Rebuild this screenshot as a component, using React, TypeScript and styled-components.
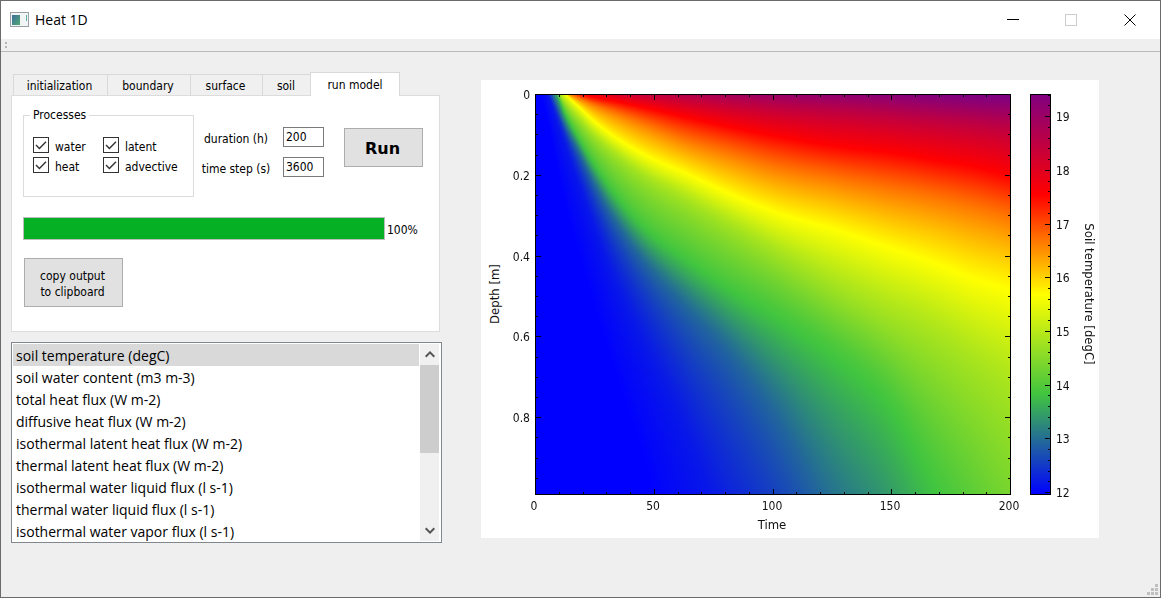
import React, { useEffect, useRef, useState } from "react";
import styled, { createGlobalStyle } from "styled-components";

const uiFont = `"DejaVu Sans Condensed", "DejaVu Sans", sans-serif`;
const shellFont = `"Open Sans", "Noto Sans", sans-serif`;

const GlobalStyle = createGlobalStyle`
  *, *::before, *::after { box-sizing: border-box; }
  body { margin: 0; background: #efefef; font-family: ${uiFont}; font-size: 12px; line-height: 16px; color: #000; }
  button, input { font: inherit; color: inherit; margin: 0; }
`;

const Window = styled.div`
  display: flex;
  flex-direction: column;
  min-height: 100vh;
  border: 1px solid #6b6b6e;
  background: #efefef;
`;

const TitleBar = styled.header`
  display: flex;
  align-items: center;
  height: 38px;
  padding-left: 9px;
  background: #fff;
`;

const Title = styled.h1`
  flex: 1;
  margin: 0 0 0 5px;
  font: 400 14px/20px ${shellFont};
`;

const CaptionButton = styled.button`
  display: grid;
  place-items: center;
  width: 59px;
  height: 100%;
  padding: 0;
  border: 0;
  background: none;
`;

const ToolStrip = styled.div`
  display: flex;
  align-items: flex-start;
  height: 13px;
  padding: 3px 4px;
  border-bottom: 1px solid #b9b9b9;
`;

const Content = styled.main`
  flex: 1;
  display: grid;
  grid-template-columns: 431px minmax(0, 1fr);
  align-items: start;
  gap: 39px;
  padding: 20px 61px 0 10px;
`;

const Sidebar = styled.div`
  display: flex;
  flex-direction: column;
  gap: 10px;
`;

const TabList = styled.div`
  display: flex;
  align-items: flex-end;
  height: 23px;
  padding-left: 2px;
`;

const Tab = styled.button<{ $active?: boolean; $width: number }>`
  width: ${(p) => p.$width}px;
  height: ${(p) => (p.$active ? 24 : 21)}px;
  margin: 0 0 ${(p) => (p.$active ? -1 : 0)}px ${(p) => (p.$active ? -1 : 0)}px;
  padding: ${(p) => (p.$active ? "0" : "2px 2px 0 0")};
  border: 1px solid #d9d9d9;
  border-width: 1px ${(p) => (p.$active ? 1 : 0)}px 0 1px;
  background: ${(p) => (p.$active ? "#fff" : "#f0f0f0")};
  position: relative;
`;

const TabPanel = styled.section`
  width: 429px;
  height: 237px;
  padding: 12px 11px;
  border: 1px solid #dcdcdc;
  background: #fff;
`;

const Controls = styled.div`
  display: flex;
  align-items: flex-start;
`;

const Processes = styled.fieldset`
  display: grid;
  grid-template-columns: 70px auto;
  grid-auto-rows: 20px;
  align-content: start;
  width: 171px;
  height: 90px;
  margin: -1px 0 0;
  padding: 14px 9px 0;
  border: 1px solid #dcdcdc;
  min-width: 0;
`;

const Legend = styled.legend`
  margin-left: -3px;
  padding: 0 3px;
  height: 16px;
`;

const CheckLabel = styled.label`
  display: flex;
  align-items: center;
  gap: 6px;
  height: 20px;
`;

const CheckBox = styled.span`
  display: grid;
  width: 16px;
  height: 16px;
  margin-top: -4px;
  > * { grid-area: 1 / 1; }
  > svg { pointer-events: none; }
  > input:not(:checked) + svg { visibility: hidden; }
`;

const CheckInput = styled.input`
  appearance: none;
  width: 16px;
  height: 16px;
  border: 1px solid #333;
  background: #fff;
`;

const Settings = styled.div`
  display: grid;
  grid-template-columns: 89px 41px;
  row-gap: 10px;
  padding-top: 19px;
`;

const SettingLabel = styled.label`
  padding: 4px 5px 0 0;
  text-align: center;
  white-space: nowrap;
  height: 20px;
`;

const NumberBox = styled.input`
  width: 41px;
  height: 20px;
  padding: 0 2px;
  border: 1px solid #7a7a7a;
  background: #fff;
`;

const PushButton = styled.button<{ $primary?: boolean }>`
  width: ${(p) => (p.$primary ? 79 : 99)}px;
  height: ${(p) => (p.$primary ? 39 : 49)}px;
  margin: ${(p) => (p.$primary ? "20px 0 0 20px" : "18px 0 0 1px")};
  padding: 2px 2px 0 0;
  border: 1px solid #adadad;
  background: #e1e1e1;
  ${(p) => p.$primary && `font-family: "DejaVu Sans", sans-serif; font-weight: 700; font-size: 16px;`}
`;

const ProgressRow = styled.div`
  display: flex;
  align-items: center;
  gap: 2px;
  margin-top: 20px;
`;

const ProgressTrack = styled.div`
  width: 362px;
  height: 23px;
  border: 1px solid #bcbcbc;
  background: #e6e6e6;
`;

const ProgressFill = styled.div`
  height: 100%;
  background: #06b025;
`;

const ProgressText = styled.span`
  padding-top: 2px;
`;

const ListFrame = styled.div`
  display: flex;
  height: 201px;
  padding: 1px 2px 1px 1px;
  border: 1px solid #828790;
  background: #fff;
`;

const List = styled.ul`
  flex: 1;
  margin: 0;
  padding: 0;
  overflow: hidden;
  list-style: none;
  font: 14px/24px ${shellFont};
`;

const ListItem = styled.li<{ $selected: boolean }>`
  height: 22px;
  padding-left: 3px;
  background: ${(p) => (p.$selected ? "#d9d9d9" : "transparent")};
  cursor: default;
`;

const ScrollBar = styled.div`
  display: flex;
  flex-direction: column;
  width: 20px;
  border-left: 1px solid #fff;
  background: #f0f0f0;
`;

const ScrollButton = styled.button`
  display: grid;
  place-items: center;
  height: 21px;
  padding: 0;
  border: 0;
  background: none;
`;

const ScrollTrack = styled.div`
  flex: 1;
`;

const ScrollThumb = styled.div`
  height: 88px;
  background: #cdcdcd;
`;

const ChartCard = styled.figure`
  margin: 8px 0 0;
  background: #fff;
  > svg { display: block; width: 100%; height: auto; }
  text { font-family: ${uiFont}; font-size: 12px; fill: #111; }
  canvas { display: block; width: 475px; height: 400px; }
`;

const AxisTitle = styled.text`
  && { font-size: 13px; }
`;

const StatusBar = styled.footer`
  display: flex;
  justify-content: flex-end;
  padding: 0 2px 2px 0;
`;

/* ---------- temperature field ---------- */

const STOPS = [
  [0, 0, 255],
  [64, 196, 64],
  [255, 255, 0],
  [255, 0, 0],
  [128, 0, 128],
];

function colour(u: number): number[] {
  const s = Math.min(0.99999, Math.max(0, u)) * 4;
  const i = Math.floor(s);
  const f = s - i;
  return STOPS[i].map((c, k) => c + (STOPS[i + 1][k] - c) * f);
}

/* Depth of each isotherm (normalised temperature) at a set of times, in grid cells. */
const TIMES = [0, 12, 20, 30, 45, 60, 80, 112, 150, 195, 245, 300, 350, 400, 440, 475];
const LEVELS = [1, 0.875, 0.75, 0.625, 0.5, 0.375, 0.25, 0.125, 0.06, 0.03, 0.002];
const DEPTHS = [
  [-110, -60, -45, -36, -28, -23, -17, -13, -11, -9, -7, -5, -3, 0, 2, 3],
  [-95, -50, -32, -20, -12, -8, -4, 0, 4, 9, 14, 18, 22, 27, 31, 36],
  [-85, -38, -20, -8, -1, 3, 7, 14, 23, 33, 43, 52, 58, 66, 73, 82],
  [-75, -30, -14, -3, 5, 12, 20, 33, 48, 62, 77, 88, 98, 108, 118, 128],
  [-66, -24, -10, 0, 14, 28, 43, 62, 79, 100, 120, 136, 153, 170, 186, 197],
  [-60, -20, -7, 9, 27, 44, 62, 86, 108, 134, 163, 195, 222, 250, 280, 310],
  [-54, -17, -4, 20, 47, 72, 101, 137, 166, 197, 228, 267, 312, 402, 490, 600],
  [-48, -12, 8, 33, 63, 94, 130, 175, 217, 266, 338, 450, 570, 760, 950, 1150],
  [-42, -6, 16, 42, 80, 117, 162, 220, 285, 370, 480, 640, 850, 1150, 1450, 1750],
  [-36, -1, 24, 54, 96, 138, 192, 262, 345, 470, 620, 850, 1200, 1700, 2000, 2500],
  [-20, 25, 65, 110, 165, 215, 280, 375, 540, 750, 1000, 1400, 1800, 2300, 2900, 3500],
];

/* Monotone cubic interpolation (Fritsch-Carlson, harmonic-mean slopes). */
function monotone(xs: number[], ys: number[]) {
  const n = xs.length;
  const d: number[] = [];
  for (let i = 0; i < n - 1; i++) d.push((ys[i + 1] - ys[i]) / (xs[i + 1] - xs[i]));
  const m = xs.map((_, i) => {
    if (i === 0) return d[0];
    if (i === n - 1) return d[n - 2];
    return d[i - 1] * d[i] <= 0 ? 0 : (2 * d[i - 1] * d[i]) / (d[i - 1] + d[i]);
  });
  return (x: number) => {
    if (x <= xs[0]) return ys[0];
    if (x >= xs[n - 1]) return ys[n - 1];
    let i = 0;
    while (x > xs[i + 1]) i++;
    const h = xs[i + 1] - xs[i];
    const t = (x - xs[i]) / h;
    const t2 = t * t;
    const t3 = t2 * t;
    return (
      (2 * t3 - 3 * t2 + 1) * ys[i] +
      (t3 - 2 * t2 + t) * h * m[i] +
      (3 * t2 - 2 * t3) * ys[i + 1] +
      (t3 - t2) * h * m[i + 1]
    );
  };
}

function HeatMap() {
  const ref = useRef<HTMLCanvasElement>(null);
  useEffect(() => {
    const ctx = ref.current?.getContext("2d");
    if (!ctx) return;
    const w = 475;
    const h = 400;
    const image = ctx.createImageData(w, h);
    const isotherms = DEPTHS.map((row) => monotone(TIMES, row));
    for (let x = 0; x < w; x++) {
      const profile = monotone(isotherms.map((f) => f(x)), LEVELS);
      for (let y = 0; y < h; y++) {
        const [r, g, b] = colour(profile(y) - 0.002);
        image.data.set([r, g, b, 255], (y * w + x) * 4);
      }
    }
    ctx.putImageData(image, 0, 0);
  }, []);
  return <canvas ref={ref} width={475} height={400} />;
}

/* ---------- chart ---------- */

const PLOT = { x: 54, y: 14, w: 475, h: 400 };
const range = (n: number) => Array.from({ length: n }, (_, i) => i);

function Chart() {
  const right = PLOT.x + PLOT.w;
  const bottom = PLOT.y + PLOT.h;
  const barX = 549;
  const barW = 20;
  let ticks = "";
  range(19).forEach((i) => {
    const k = i + 1;
    const x = PLOT.x + Math.round(k * 23.75) + 0.5;
    const len = k % 5 === 0 ? 5 : 2;
    ticks += `M${x} ${PLOT.y + 1}v${len}M${x} ${bottom}v${-len}`;
  });
  range(19).forEach((i) => {
    const k = i + 1;
    const y = PLOT.y + Math.round(k * 20.2) + 0.5;
    const len = k % 4 === 0 ? 5 : 2;
    ticks += `M${PLOT.x + 1} ${y}h${len}M${right} ${y}h${-len}`;
  });
  range(38).forEach((i) => {
    const y = Math.round(412 - i * 10.74) + 0.5;
    const len = i % 5 === 0 ? 5 : 2;
    ticks += `M${barX + barW} ${y}h${-len}`;
  });
  return (
    <svg viewBox="0 0 618 458" role="img" aria-label="Soil temperature by time and depth">
      <defs>
        <linearGradient id="scale" x1="0" y1="1" x2="0" y2="0">
          {STOPS.map((c, i) => (
            <stop key={i} offset={i / 4} stopColor={`rgb(${c.join(",")})`} />
          ))}
        </linearGradient>
      </defs>
      <foreignObject x={PLOT.x} y={PLOT.y} width={PLOT.w} height={PLOT.h}>
        <HeatMap />
      </foreignObject>
      <rect x={barX + 0.5} y={PLOT.y + 0.5} width={barW} height={PLOT.h} fill="url(#scale)" stroke="#000" />
      <rect x={PLOT.x + 0.5} y={PLOT.y + 0.5} width={PLOT.w} height={PLOT.h} fill="none" stroke="#000" />
      <path d={ticks} stroke="#000" fill="none" />
      {["0", "0.2", "0.4", "0.6", "0.8"].map((t, i) => (
        <text key={t} x={49} y={Math.round(19 + i * 80.8)} textAnchor="end">{t}</text>
      ))}
      {["0", "50", "100", "150", "200"].map((t, i) => (
        <text key={t} x={Math.round(53 + i * 118.75)} y={430} textAnchor="middle">{t}</text>
      ))}
      {["12", "13", "14", "15", "16", "17", "18", "19"].map((t, i) => (
        <text key={t} x={575} y={Math.round(417 - i * 53.7)}>{t}</text>
      ))}
      <AxisTitle x={291} y={449} textAnchor="middle">Time</AxisTitle>
      <AxisTitle transform="translate(18 214) rotate(-90)" textAnchor="middle">Depth [m]</AxisTitle>
      <AxisTitle transform="translate(604 214) rotate(90)" textAnchor="middle">Soil temperature [degC]</AxisTitle>
    </svg>
  );
}

/* ---------- window ---------- */

const TABS = [
  { name: "initialization", width: 94 },
  { name: "boundary", width: 83 },
  { name: "surface", width: 72 },
  { name: "soil", width: 49 },
  { name: "run model", width: 90 },
];

const OUTPUTS = [
  "soil temperature (degC)",
  "soil water content (m3 m-3)",
  "total heat flux (W m-2)",
  "diffusive heat flux (W m-2)",
  "isothermal latent heat flux (W m-2)",
  "thermal latent heat flux (W m-2)",
  "isothermal water liquid flux (l s-1)",
  "thermal water liquid flux (l s-1)",
  "isothermal water vapor flux (l s-1)",
];

function Process({ name }: { name: string }) {
  return (
    <CheckLabel>
      <CheckBox>
        <CheckInput type="checkbox" defaultChecked />
        <svg width="16" height="16" viewBox="0 0 16 16" fill="none" stroke="#333" strokeWidth="1.4">
          <path d="M3 8l3.4 3.4L13 4.8" />
        </svg>
      </CheckBox>
      {name}
    </CheckLabel>
  );
}

function AppIcon() {
  return (
    <svg width="20" height="16" viewBox="0 0 20 16" aria-hidden="true">
      <defs>
        <linearGradient id="pane" x1="0" y1="0" x2="1" y2="1">
          <stop offset="0" stopColor="#3c6f9c" />
          <stop offset="1" stopColor="#4fa872" />
        </linearGradient>
      </defs>
      <rect x="0.5" y="0.5" width="18" height="14" fill="#f2f5f5" stroke="#9aa1a6" />
      <rect x="2" y="3" width="8" height="10" fill="url(#pane)" />
      <rect x="16" y="3" width="1" height="6" fill="#5fae9a" />
    </svg>
  );
}

export default function App() {
  const [selected, setSelected] = useState(0);
  const progress = 100;
  return (
    <>
      <GlobalStyle />
      <Window>
        <TitleBar>
          <AppIcon />
          <Title>Heat 1D</Title>
          <CaptionButton aria-label="Minimize">
            <svg width="13" height="13" stroke="#000"><path d="M1 5.5h12" /></svg>
          </CaptionButton>
          <CaptionButton aria-label="Maximize" disabled>
            <svg width="13" height="13" fill="none" stroke="#ccc"><rect x="0.5" y="0.5" width="11" height="11" /></svg>
          </CaptionButton>
          <CaptionButton aria-label="Close">
            <svg width="13" height="13" stroke="#000"><path d="M0.5 0.5l11 11M11.5 0.5l-11 11" /></svg>
          </CaptionButton>
        </TitleBar>
        <ToolStrip>
          <svg width="3" height="6" fill="#b5b5b5" aria-hidden="true">
            <rect width="2" height="2" />
            <rect y="4" width="2" height="2" />
          </svg>
        </ToolStrip>
        <Content>
          <Sidebar>
            <div>
              <TabList role="tablist">
                {TABS.map((t) => (
                  <Tab key={t.name} role="tab" $width={t.width} $active={t.name === "run model"} aria-selected={t.name === "run model"}>
                    {t.name}
                  </Tab>
                ))}
              </TabList>
              <TabPanel role="tabpanel">
                <Controls>
                  <Processes>
                    <Legend>Processes</Legend>
                    <Process name="water" />
                    <Process name="latent" />
                    <Process name="heat" />
                    <Process name="advective" />
                  </Processes>
                  <Settings>
                    <SettingLabel htmlFor="duration">duration (h)</SettingLabel>
                    <NumberBox id="duration" defaultValue="200" />
                    <SettingLabel htmlFor="step">time step (s)</SettingLabel>
                    <NumberBox id="step" defaultValue="3600" />
                  </Settings>
                  <PushButton $primary>Run</PushButton>
                </Controls>
                <ProgressRow>
                  <ProgressTrack role="progressbar" aria-label="Run progress" aria-valuenow={progress}>
                    <ProgressFill style={{ width: `${progress}%` }} />
                  </ProgressTrack>
                  <ProgressText>{progress}%</ProgressText>
                </ProgressRow>
                <PushButton>
                  copy output
                  <br />
                  to clipboard
                </PushButton>
              </TabPanel>
            </div>
            <ListFrame>
              <List role="listbox" aria-label="Output variable">
                {OUTPUTS.map((o, i) => (
                  <ListItem key={o} role="option" aria-selected={i === selected} $selected={i === selected} onClick={() => setSelected(i)}>
                    {o}
                  </ListItem>
                ))}
              </List>
              <ScrollBar>
                <ScrollButton aria-label="Scroll up">
                  <svg width="10" height="7" fill="none" stroke="#555" strokeWidth="2"><path d="M0.7 5.7L5 1.4l4.3 4.3" /></svg>
                </ScrollButton>
                <ScrollTrack>
                  <ScrollThumb />
                </ScrollTrack>
                <ScrollButton aria-label="Scroll down">
                  <svg width="10" height="7" fill="none" stroke="#555" strokeWidth="2"><path d="M0.7 1.3L5 5.6l4.3-4.3" /></svg>
                </ScrollButton>
              </ScrollBar>
            </ListFrame>
          </Sidebar>
          <ChartCard>
            <Chart />
          </ChartCard>
        </Content>
        <StatusBar>
          <svg width="11" height="11" fill="#bfbfbf" aria-hidden="true">
            <path d="M8 0h3v3h-3zM4 4h3v3h-3zM8 4h3v3h-3zM0 8h3v3h-3zM4 8h3v3h-3zM8 8h3v3h-3z" />
          </svg>
        </StatusBar>
      </Window>
    </>
  );
}
